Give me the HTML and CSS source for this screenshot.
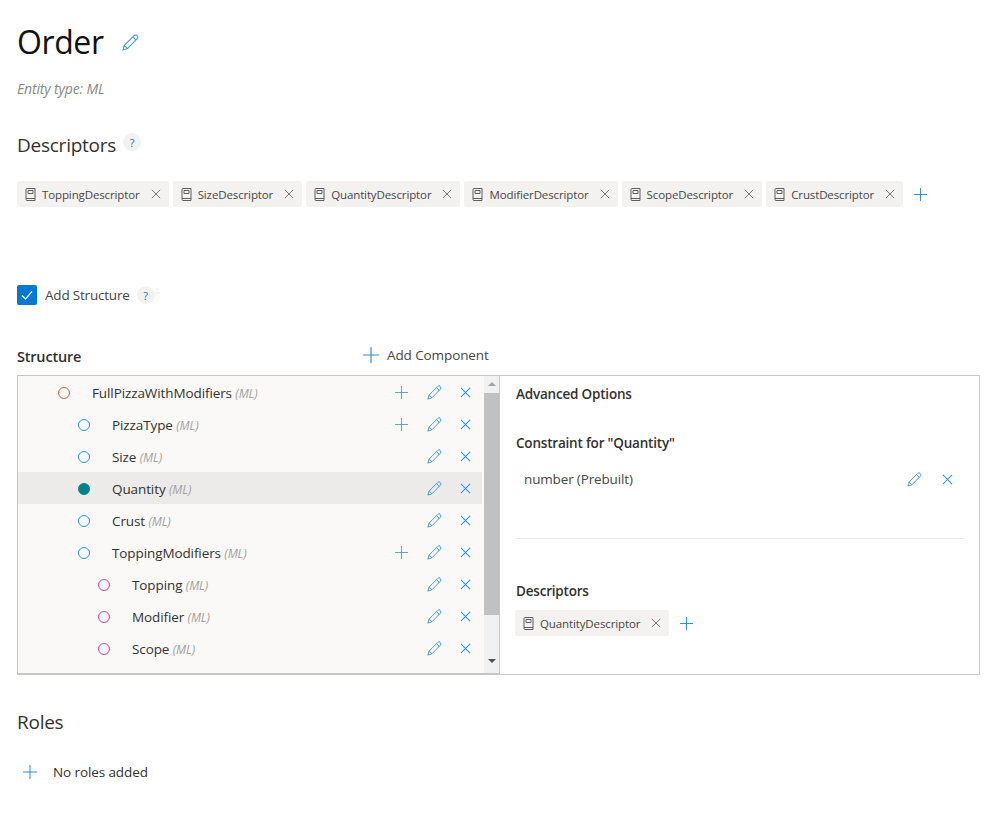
FILE: index.html

```html
<!DOCTYPE html>
<html lang="en">
<head>
<meta charset="UTF-8" />
<title>Order</title>
<link rel="stylesheet" href="styles.css">
</head>
<body>
  <svg class="defs" width="0" height="0">
    <symbol id="pencil" viewBox="0 0 16 16">
      <path d="M1 15l1.2-4.3L11.4 1.5a1.9 1.9 0 0 1 2.9 0.2 1.9 1.9 0 0 1 0 2.7L5.2 13.7z M10.2 2.8l3 3 M2.2 10.7l3 3" fill="none" stroke="#3f98de" />
    </symbol>
    <symbol id="crossGrey" viewBox="0 0 12 12">
      <path d="M1 1l10 10 M11 1L1 11" fill="none" stroke="#605e5c" />
    </symbol>
    <symbol id="plus" viewBox="0 0 16 16">
      <path d="M8 1v14 M1 8h14" fill="none" stroke="#4a9fe0" />
    </symbol>
    <symbol id="plusStrong" viewBox="0 0 16 16">
      <path d="M8 1v14 M1 8h14" fill="none" stroke="#2b88d8" />
    </symbol>
    <symbol id="book" viewBox="0 0 11 13">
      <path d="M1 10.5V1.5a1 1 0 0 1 1-1h8v12H2a1 1 0 0 1-1-1z M1 10.5h9 M3 2.5h5v3H3z" fill="none" stroke="#605e5c" />
    </symbol>
  </svg>

  <div class="page">
    <header class="titleRow">
      <h1>Order</h1>
      <svg class="icon pencilTitle"><use href="#pencil" /></svg>
    </header>
    <p class="entityType">Entity type: ML</p>

    <div class="headingRow">
      <h2>Descriptors</h2>
      <span class="help helpRaised">?</span>
    </div>
    <div class="chips">
      <span class="chip"><svg class="bookIcon"><use href="#book" /></svg><span class="chipText">ToppingDescriptor</span><svg class="chipX"><use href="#crossGrey" /></svg></span>
      <span class="chip"><svg class="bookIcon"><use href="#book" /></svg><span class="chipText">SizeDescriptor</span><svg class="chipX"><use href="#crossGrey" /></svg></span>
      <span class="chip"><svg class="bookIcon"><use href="#book" /></svg><span class="chipText">QuantityDescriptor</span><svg class="chipX"><use href="#crossGrey" /></svg></span>
      <span class="chip"><svg class="bookIcon"><use href="#book" /></svg><span class="chipText">ModifierDescriptor</span><svg class="chipX"><use href="#crossGrey" /></svg></span>
      <span class="chip"><svg class="bookIcon"><use href="#book" /></svg><span class="chipText">ScopeDescriptor</span><svg class="chipX"><use href="#crossGrey" /></svg></span>
      <span class="chip"><svg class="bookIcon"><use href="#book" /></svg><span class="chipText">CrustDescriptor</span><svg class="chipX"><use href="#crossGrey" /></svg></span>
      <svg class="icon plusChip"><use href="#plusStrong" /></svg>
    </div>

    <div class="checkRow">
      <span class="checkbox">
        <svg viewBox="0 0 20 20" width="20" height="20"><path class="tick" d="M5 10.5l3.5 3.5L15 6.5" /></svg>
      </span>
      <span class="checkLabel">Add Structure</span>
      <span class="help">?</span>
    </div>

    <div class="structureHead">
      <h3>Structure</h3>
      <span class="addComponent"><svg class="icon plusLarge"><use href="#plusStrong" /></svg><span>Add Component</span></span>
    </div>

    <section class="panel">
      <div class="treeSide">
        <ul class="tree">
          <li class="row lvl0 red"><i class="dot"></i><span class="name">FullPizzaWithModifiers <em>(ML)</em></span><svg class="icon act"><use href="#plus" /></svg><svg class="icon act"><use href="#pencil" /></svg><svg class="icon actX" viewBox="0 0 12 12"><path class="xLine" d="M1 1l10 10 M11 1L1 11" /></svg></li>
          <li class="row lvl1 teal"><i class="dot"></i><span class="name">PizzaType <em>(ML)</em></span><svg class="icon act"><use href="#plus" /></svg><svg class="icon act"><use href="#pencil" /></svg><svg class="icon actX" viewBox="0 0 12 12"><path class="xLine" d="M1 1l10 10 M11 1L1 11" /></svg></li>
          <li class="row lvl1 teal"><i class="dot"></i><span class="name">Size <em>(ML)</em></span><svg class="icon act"><use href="#pencil" /></svg><svg class="icon actX" viewBox="0 0 12 12"><path class="xLine" d="M1 1l10 10 M11 1L1 11" /></svg></li>
          <li class="row lvl1 teal selected"><i class="dot"></i><span class="name">Quantity <em>(ML)</em></span><svg class="icon act"><use href="#pencil" /></svg><svg class="icon actX" viewBox="0 0 12 12"><path class="xLine" d="M1 1l10 10 M11 1L1 11" /></svg></li>
          <li class="row lvl1 teal"><i class="dot"></i><span class="name">Crust <em>(ML)</em></span><svg class="icon act"><use href="#pencil" /></svg><svg class="icon actX" viewBox="0 0 12 12"><path class="xLine" d="M1 1l10 10 M11 1L1 11" /></svg></li>
          <li class="row lvl1 teal"><i class="dot"></i><span class="name">ToppingModifiers <em>(ML)</em></span><svg class="icon act"><use href="#plus" /></svg><svg class="icon act"><use href="#pencil" /></svg><svg class="icon actX" viewBox="0 0 12 12"><path class="xLine" d="M1 1l10 10 M11 1L1 11" /></svg></li>
          <li class="row lvl2 pink"><i class="dot"></i><span class="name">Topping <em>(ML)</em></span><svg class="icon act"><use href="#pencil" /></svg><svg class="icon actX" viewBox="0 0 12 12"><path class="xLine" d="M1 1l10 10 M11 1L1 11" /></svg></li>
          <li class="row lvl2 pink"><i class="dot"></i><span class="name">Modifier <em>(ML)</em></span><svg class="icon act"><use href="#pencil" /></svg><svg class="icon actX" viewBox="0 0 12 12"><path class="xLine" d="M1 1l10 10 M11 1L1 11" /></svg></li>
          <li class="row lvl2 pink"><i class="dot"></i><span class="name">Scope <em>(ML)</em></span><svg class="icon act"><use href="#pencil" /></svg><svg class="icon actX" viewBox="0 0 12 12"><path class="xLine" d="M1 1l10 10 M11 1L1 11" /></svg></li>
        </ul>
        <div class="scrollbar">
          <span class="arrowUp"></span>
          <span class="thumb"></span>
          <span class="arrowDown"></span>
        </div>
      </div>

      <div class="options">
        <h4 class="optTitle">Advanced Options</h4>
        <h4 class="optConstraint">Constraint for "Quantity"</h4>
        <div class="constraintRow">
          <span class="constraintName">number (Prebuilt)</span>
          <svg class="icon act"><use href="#pencil" /></svg>
          <svg class="icon actX" viewBox="0 0 12 12"><path class="xLine" d="M1 1l10 10 M11 1L1 11" /></svg>
        </div>
        <hr class="sep" />
        <h4 class="optDesc">Descriptors</h4>
        <div class="chips">
          <span class="chip"><svg class="bookIcon"><use href="#book" /></svg><span class="chipText">QuantityDescriptor</span><svg class="chipX"><use href="#crossGrey" /></svg></span>
          <svg class="icon plusChip"><use href="#plusStrong" /></svg>
        </div>
      </div>
    </section>

    <h2 class="rolesHead">Roles</h2>
    <div class="rolesRow">
      <svg class="icon plusRoles"><use href="#plusStrong" /></svg>
      <span>No roles added</span>
    </div>
  </div>
</body>
</html>
```

FILE: styles.css

```css
html, body {
  margin: 0;
  padding: 0;
  background: #fff;
  color: #323130;
  font-family: "Open Sans", "Noto Sans", sans-serif;
}
.defs {
  position: absolute;
}
.page {
  width: 963px;
  margin-left: 17px;
  height: 828px;
  overflow: hidden;
}
h1, h2, h3, h4, p, ul {
  margin: 0;
  padding: 0;
}
.icon, .bookIcon, .chipX {
  display: block;
  flex: none;
}
.tick {
  fill: none;
  stroke: #fff;
  stroke-width: 1.2;
}
.xLine {
  fill: none;
  stroke: #2f95e6;
  stroke-width: 1.1;
}
.titleRow {
  display: flex;
  align-items: center;
  height: 42px;
  padding-top: 21px;
}
h1 {
  font-size: 32px;
  font-weight: 400;
  color: #111;
  line-height: 42px;
  letter-spacing: -0.4px;
}
.pencilTitle {
  width: 17px;
  height: 17px;
  margin-left: 18px;
}
.entityType {
  margin-top: 16px;
  font-size: 14px;
  line-height: 20px;
  font-style: italic;
  color: #8a8886;
  letter-spacing: -0.15px;
}
.headingRow {
  display: flex;
  align-items: center;
  margin-top: 32px;
  height: 28px;
}
h2 {
  font-size: 19px;
  font-weight: 400;
  line-height: 28px;
  letter-spacing: -0.25px;
}
.help {
  display: flex;
  align-items: center;
  justify-content: center;
  width: 18px;
  height: 18px;
  margin-left: 7px;
  border-radius: 50%;
  background: #f3f2f1;
  color: #0078d4;
  font-size: 11px;
}
.helpRaised {
  margin-bottom: 6px;
}
.chips {
  display: flex;
  align-items: center;
  gap: 4px;
}
.page > .chips {
  margin-top: 22px;
}
.chip {
  display: flex;
  align-items: center;
  height: 26px;
  padding: 0 8px 0 8px;
  background: #f3f2f1;
  border-radius: 2px;
}
.bookIcon {
  width: 11px;
  height: 13px;
}
.chipText {
  margin-left: 6px;
  font-size: 11.5px;
  color: #484644;
  letter-spacing: -0.12px;
  white-space: nowrap;
}
.chipX {
  width: 10px;
  height: 10px;
  margin-left: 11px;
}
.plusChip {
  width: 15px;
  height: 15px;
  margin-left: 6px;
}
.checkRow {
  display: flex;
  align-items: center;
  margin-top: 78px;
  height: 20px;
}
.checkbox {
  display: block;
  width: 20px;
  height: 20px;
  background: #0078d4;
  border-radius: 2px;
}
.checkLabel {
  margin-left: 8px;
  font-size: 13.5px;
  color: #484644;
  letter-spacing: -0.2px;
}
.structureHead {
  display: flex;
  align-items: center;
  margin-top: 41px;
  height: 20px;
}
h3 {
  width: 345px;
  font-size: 14.5px;
  font-weight: 600;
  letter-spacing: -0.2px;
}
.addComponent {
  display: flex;
  align-items: center;
  margin-bottom: 2px;
  font-size: 13.5px;
  color: #484644;
  letter-spacing: -0.1px;
}
.plusLarge {
  width: 18px;
  height: 18px;
  margin-right: 7px;
}
.panel {
  display: flex;
  height: 298px;
  margin-top: 9px;
  border: 1px solid #c8c6c4;
}
.treeSide {
  display: flex;
  width: 481px;
  flex: none;
  background: #faf9f8;
  border-right: 1px solid #c8c6c4;
  border-bottom: 1px solid #c8c6c4;
}
.tree {
  list-style: none;
  flex: 1;
}
.row {
  display: flex;
  align-items: center;
  height: 32px;
  font-size: 13.5px;
  letter-spacing: -0.1px;
  color: #323130;
}
.selected {
  background: #edebe9;
}
.lvl0 {
  padding-left: 40px;
}
.lvl1 {
  padding-left: 60px;
}
.lvl2 {
  padding-left: 80px;
}
.dot {
  display: block;
  flex: none;
  width: 12px;
  height: 12px;
  box-sizing: border-box;
  border: 1px solid;
  border-radius: 50%;
  margin: 2px 22px 0 0;
}
.red .dot {
  border-color: #e0604a;
}
.teal .dot {
  border-color: #2b9aa0;
}
.pink .dot {
  border-color: #e83caf;
}
.selected .dot {
  background: #038387;
  border-color: #038387;
}
.name {
  flex: 1;
  margin-top: 2px;
  white-space: nowrap;
}
.name em {
  font-size: 12px;
  color: #a19f9d;
}
.act {
  width: 15px;
  height: 15px;
  margin-right: 18px;
}
.actX {
  width: 11px;
  height: 11px;
  margin-right: 11px;
}
.scrollbar {
  display: flex;
  flex-direction: column;
  align-items: center;
  width: 15px;
  flex: none;
  margin-left: 2px;
  background: #f1f1f1;
}
.arrowUp, .arrowDown {
  display: block;
  width: 0;
  height: 0;
  border-left: 4px solid transparent;
  border-right: 4px solid transparent;
}
.arrowUp {
  margin-top: 6px;
  border-bottom: 4px solid #a3a3a3;
}
.arrowDown {
  margin-top: 44px;
  border-top: 4px solid #505050;
}
.thumb {
  display: block;
  width: 100%;
  height: 222px;
  margin-top: 7px;
  background: #c1c1c1;
}
.options {
  flex: 1;
  padding: 0 15px 0 16px;
}
h4 {
  font-size: 13.5px;
  font-weight: 600;
  letter-spacing: -0.2px;
  line-height: 18px;
}
.optTitle {
  margin-top: 9px;
}
.optConstraint {
  margin-top: 31px;
}
.constraintRow {
  display: flex;
  align-items: center;
  margin-top: 15px;
  height: 24px;
  padding-left: 8px;
  font-size: 13.5px;
  letter-spacing: -0.15px;
  color: #484644;
}
.constraintRow .act {
  margin-right: 20px;
}
.constraintName {
  flex: 1;
}
.sep {
  margin: 47px 0 0;
  border: 0;
  border-top: 1px solid #edebe9;
}
.optDesc {
  margin-top: 43px;
}
.options .chips {
  margin-top: 10px;
  margin-left: -1px;
}
.rolesHead {
  margin-top: 33px;
}
.rolesRow {
  display: flex;
  align-items: center;
  margin-top: 26px;
  height: 20px;
  font-size: 13.5px;
  color: #323130;
  letter-spacing: -0.1px;
}
.plusRoles {
  width: 16px;
  height: 16px;
  margin-left: 5px;
  margin-right: 15px;
}
```
